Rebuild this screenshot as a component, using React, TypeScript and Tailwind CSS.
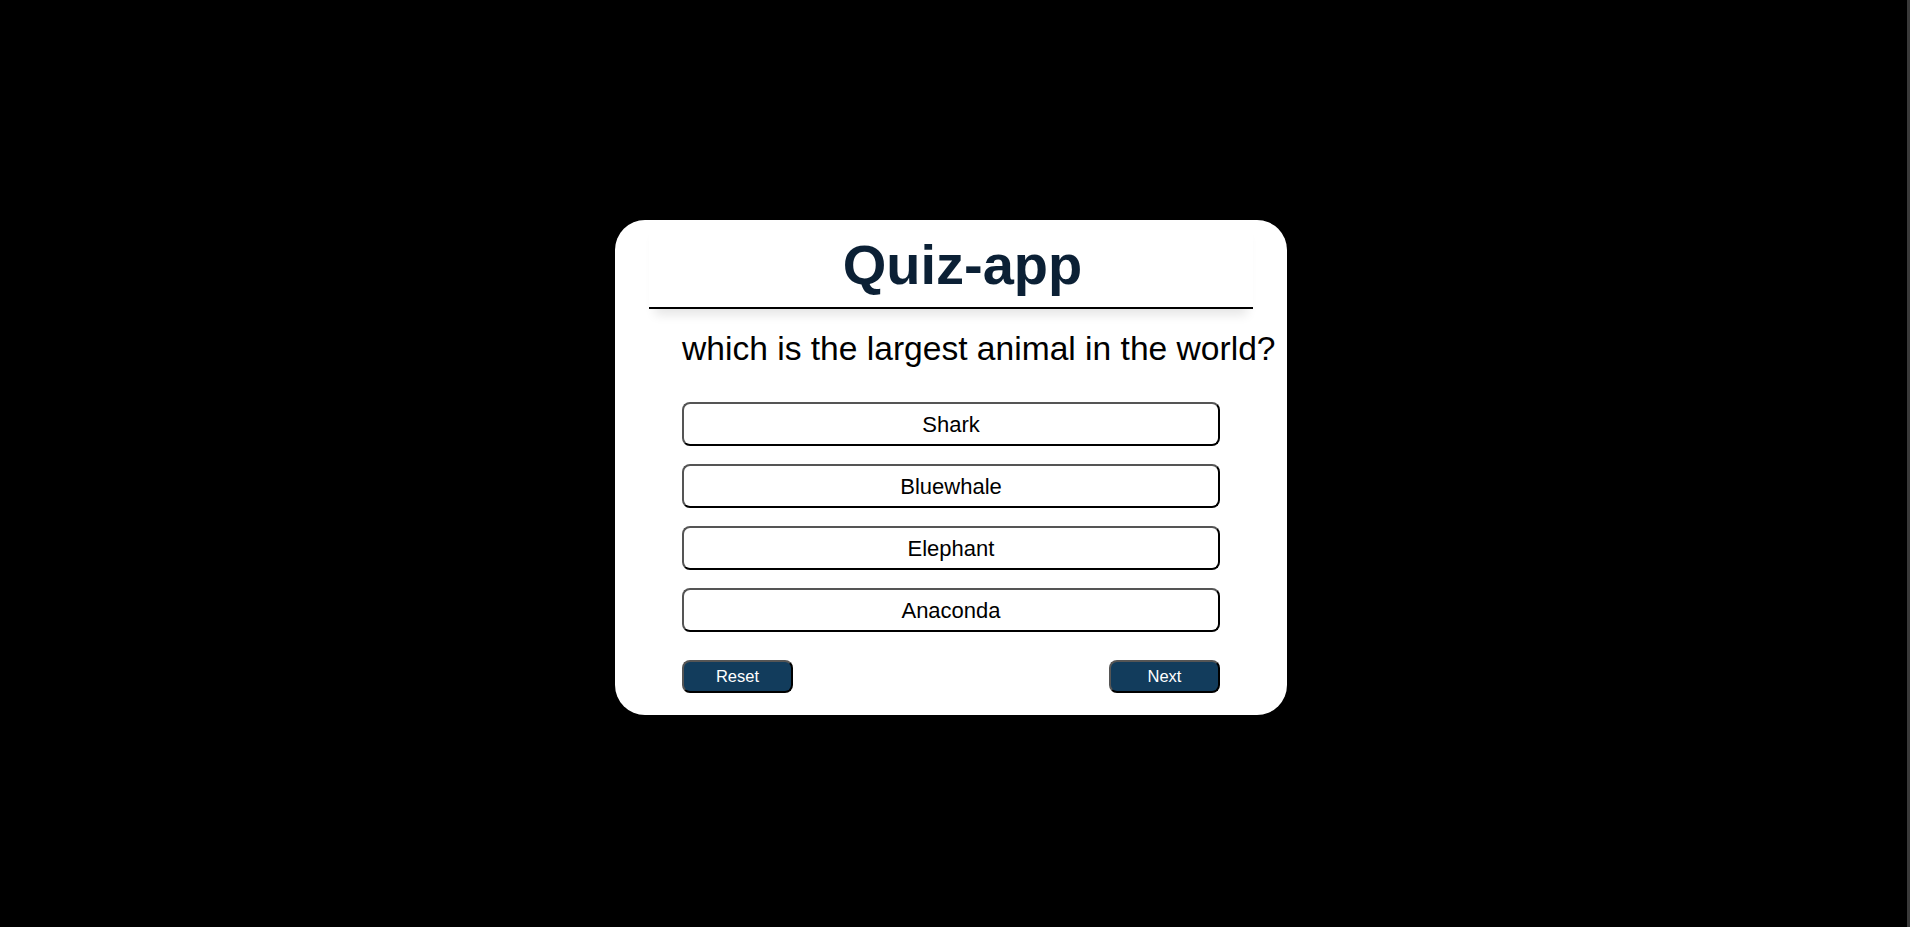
import React from "react";

const options = ["Shark", "Bluewhale", "Elephant", "Anaconda"];

export default function App() {
  return (
    <div className="flex h-screen w-full bg-black" style={{ fontFamily: '"Liberation Sans", Arial, sans-serif' }}>
      <div className="flex flex-1 items-center justify-center pr-[5px] pt-[8px]">
        <div className="w-[672px] h-[495px] bg-white rounded-[30px] flex flex-col">
          <div className="mx-[34px] pt-[14px] pb-[10px] border-b-2 border-black shadow-[0_12px_10px_-6px_rgba(0,0,0,0.1)]">
            <h1 className="pl-[23px] text-center text-[56px] font-bold leading-[1.117] text-[#0b2035]">Quiz-app</h1>
          </div>
          <div className="px-[67px] flex flex-col">
            <p className="mt-[21px] text-[33.6px] leading-[1.117] text-black whitespace-nowrap">which is the largest animal in the world?</p>
            <div className="mt-[35px] flex flex-col gap-[18px]">
              {options.map((o) => (
                <button
                  key={o}
                  className="h-[44px] w-full rounded-[8px] border-2 border-t-[#555] border-l-[#555] border-b-black border-r-black bg-white text-[22px] text-black"
                >
                  {o}
                </button>
              ))}
            </div>
            <div className="mt-[28px] flex justify-between">
              <button className="h-[33px] w-[111px] rounded-[8px] border-2 border-t-[#555] border-l-[#555] border-b-black border-r-black bg-[#123c5c] text-[16.5px] text-white">
                Reset
              </button>
              <button className="h-[33px] w-[111px] rounded-[8px] border-2 border-t-[#555] border-l-[#555] border-b-black border-r-black bg-[#123c5c] text-[16.5px] text-white">
                Next
              </button>
            </div>
          </div>
        </div>
      </div>
      <div className="w-[3px] h-full bg-[#3a3a3a]" />
    </div>
  );
}
